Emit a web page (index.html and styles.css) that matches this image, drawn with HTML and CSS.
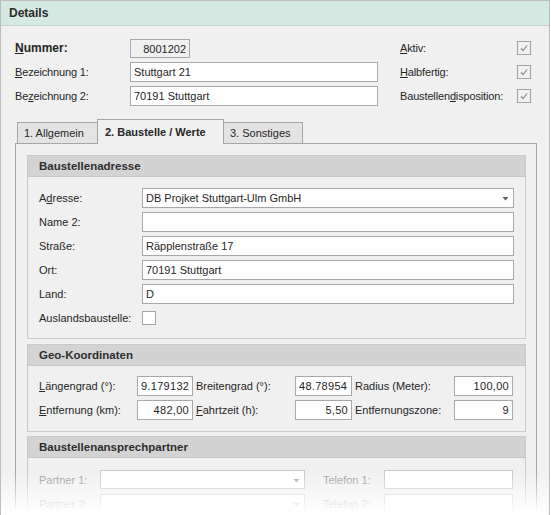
FILE: index.html
```html
<!DOCTYPE html>
<html>
	<head>
		<meta charset="utf-8">
		<title>Details</title>
		<link rel="stylesheet" href="styles.css">
	</head>
	<body>
	<div class="window">
		<div class="title">Details</div>
		<div class="head">
			<div class="head-left">
				<div class="row">
					<span class="lbl strong"><u>N</u>ummer:</span>
					<div class="field ro num short">8001202</div>
				</div>
				<div class="row">
					<span class="lbl"><u>B</u>ezeichnung 1:</span>
					<div class="field">Stuttgart 21</div>
				</div>
				<div class="row">
					<span class="lbl">Be<u>z</u>eichnung 2:</span>
					<div class="field">70191 Stuttgart</div>
				</div>
			</div>
			<div class="head-right">
				<div class="row">
					<span class="lbl"><u>A</u>ktiv:</span>
					<span class="check ro"><svg width="12" height="12" viewBox="0 0 12 12"><polyline points="3,6.5 5,8.5 9,3.5" /></svg></span>
				</div>
				<div class="row">
					<span class="lbl"><u>H</u>albfertig:</span>
					<span class="check ro"><svg width="12" height="12" viewBox="0 0 12 12"><polyline points="3,6.5 5,8.5 9,3.5" /></svg></span>
				</div>
				<div class="row">
					<span class="lbl">Baustellen<u>d</u>isposition:</span>
					<span class="check ro"><svg width="12" height="12" viewBox="0 0 12 12"><polyline points="3,6.5 5,8.5 9,3.5" /></svg></span>
				</div>
			</div>
		</div>

		<div class="tabs">
			<div class="tab">1. Allgemein</div>
			<div class="tab active">2. Baustelle / Werte</div>
			<div class="tab">3. Sonstiges</div>
		</div>

		<div class="page">
			<div class="group">
				<div class="group-head">Baustellenadresse</div>
				<div class="group-body adr">
					<div class="line">
						<span class="lbl">A<u>d</u>resse:</span>
						<div class="field combo">DB Projket Stuttgart-Ulm GmbH<svg class="arrow" width="7" height="5" viewBox="0 0 7 5"><path d="M0.5 1h6L3.5 4.5z" /></svg></div>
					</div>
					<div class="line">
						<span class="lbl">Name 2:</span>
						<div class="field"></div>
					</div>
					<div class="line">
						<span class="lbl">Straße:</span>
						<div class="field">Räpplenstraße 17</div>
					</div>
					<div class="line">
						<span class="lbl">Ort:</span>
						<div class="field">70191 Stuttgart</div>
					</div>
					<div class="line">
						<span class="lbl">Land:</span>
						<div class="field">D</div>
					</div>
					<div class="line">
						<span class="lbl">Auslandsbaustelle:</span>
						<span class="check"></span>
					</div>
				</div>
			</div>

			<div class="group geo-group">
				<div class="group-head">Geo-Koordinaten</div>
				<div class="group-body geo">
					<span class="lbl"><u>L</u>ängengrad (°):</span>
					<div class="field">9.179132</div>
					<span class="lbl pad">Breitengrad (°):</span>
					<div class="field">48.78954</div>
					<span class="lbl pad">Radius (Meter):</span>
					<div class="field num">100,00</div>

					<span class="lbl"><u>E</u>ntfernung (km):</span>
					<div class="field num">482,00</div>
					<span class="lbl pad"><u>F</u>ahrtzeit (h):</span>
					<div class="field num">5,50</div>
					<span class="lbl pad">Entfernungszone:</span>
					<div class="field num">9</div>
				</div>
			</div>

			<div class="group">
				<div class="group-head">Baustellenansprechpartner</div>
				<div class="group-body partner">
					<span class="lbl off">Partner 1:</span>
					<div class="field combo off"><svg class="arrow" width="7" height="5" viewBox="0 0 7 5"><path d="M0.5 1h6L3.5 4.5z" /></svg></div>
					<span class="lbl off tel">Telefon 1:</span>
					<div class="field off"></div>

					<span class="lbl off">Partner 2:</span>
					<div class="field combo off"><svg class="arrow" width="7" height="5" viewBox="0 0 7 5"><path d="M0.5 1h6L3.5 4.5z" /></svg></div>
					<span class="lbl off tel">Telefon 2:</span>
					<div class="field off"></div>
				</div>
			</div>
		</div>
		<div class="fade"></div>
	</div>
	</body>
</html>
```

FILE: styles.css
```css
body{
	margin:0px;
	background:#fff;
	font-family:"Liberation Sans",Arial,sans-serif;
	font-size:11px;
	color:#262626;
}
u{text-decoration:underline;text-underline-offset:1px;}
.window{
	position:relative;
	width:550px;
	height:515px;
	box-sizing:border-box;
	border:1px solid #bdbdbd;
	border-bottom:none;
	background:#f0f0f0;
	overflow:hidden;
}
.title{
	height:24px;line-height:24px;
	padding-left:8px;
	background:#d4e9e1;
	border-bottom:1px solid #c3d3cd;
	font-weight:bold;font-size:12px;
	color:#2a2a2a;
}
/* top form */
.head{
	display:flex;
	padding:12px 0 0 14px;
}
.head-left{width:363px;}
.head-right{margin-left:22px;}
.row{
	display:flex;
	align-items:center;
	height:20px;
	margin-bottom:4px;
}
.head-left .lbl{width:115px;flex:none;letter-spacing:-0.15px;}
.head-right .lbl{width:117px;flex:none;letter-spacing:-0.15px;}
.strong{font-weight:bold;font-size:12px;letter-spacing:0 !important;}
.field{
	position:relative;
	flex:auto;
	box-sizing:border-box;
	height:20px;line-height:18px;
	padding:0 3px;
	background:#fff;
	border:1px solid #a8a8a8;
	white-space:nowrap;
	overflow:hidden;
}
.field.ro{background:#f0f0f0;}
.field.short{flex:none;width:60px;height:19px;}
.num{text-align:right;}
.check{
	flex:none;
	display:flex;align-items:center;justify-content:center;
	width:14px;height:14px;
	box-sizing:border-box;
	border:1px solid #a4a4a4;
	background:#fff;
}
.check.ro{background:#f0f0f0;}
.check polyline{fill:none;stroke:#8c8c8c;stroke-width:1.2;}
/* tabs */
.tabs{
	display:flex;
	align-items:flex-end;
	height:23px;
	margin:10px 0 0 16px;
}
.tab{
	box-sizing:border-box;
	height:21px;line-height:20px;
	padding:0 6px;
	background:#e3e3e3;
	border:1px solid #a6a6a6;border-bottom:none;
	margin-left:-1px;
}
.tab:first-child{width:81px;margin-left:0;}
.tab.active{
	position:relative;z-index:1;
	width:127px;height:25px;line-height:24px;
	margin-bottom:-1px;
	padding:0 7px;
	background:#f0f0f0;
	font-weight:bold;
}
.tab:last-child{width:80px;}
.page{
	width:522px;height:400px;
	box-sizing:border-box;
	margin-left:14px;
	padding:11px 10px 0 11px;
	border:1px solid #a6a6a6;
}
/* group boxes */
.group{
	border:1px solid #cacaca;
	margin-bottom:5px;
}
.geo-group{margin-bottom:4px;}
.group-head{
	height:20px;line-height:20px;
	padding-left:11px;
	background:#d3d3d3;
	border-bottom:1px solid #c6c6c6;
	font-weight:bold;font-size:11.5px;
	color:#2e2e2e;
}
.group-body{padding:0 11px;}
.adr{
	display:flex;flex-direction:column;gap:4px;
	padding-top:11px;padding-bottom:10px;
}
.line{display:flex;align-items:center;height:20px;}
.line .lbl{width:103px;flex:none;}
.arrow{position:absolute;right:4px;top:7px;}
.arrow path{fill:#606060;}
.geo{
	display:grid;
	grid-template-columns:98px 56px 102px 57px 102px 59px;
	grid-auto-rows:20px;
	row-gap:4px;
	align-items:center;
	padding-top:10px;padding-bottom:11px;
}
.geo .field{height:20px;letter-spacing:0.3px;}
.pad{padding-left:3px;}
.partner{
	display:grid;
	grid-template-columns:61px 205px 79px 129px;
	grid-auto-rows:19px;
	row-gap:5px;
	align-items:center;
	padding-top:12px;
}
.partner .field{height:19px;border-color:#c8c8c8;}
.tel{padding-left:18px;}
.off{color:#9c9c9c;}
.off .arrow path{fill:#b0b0b0;}
.fade{
	position:absolute;
	left:0;right:0;bottom:0;
	height:42px;
	background:linear-gradient(rgba(255,255,255,0),#fff 95%);
}
```
